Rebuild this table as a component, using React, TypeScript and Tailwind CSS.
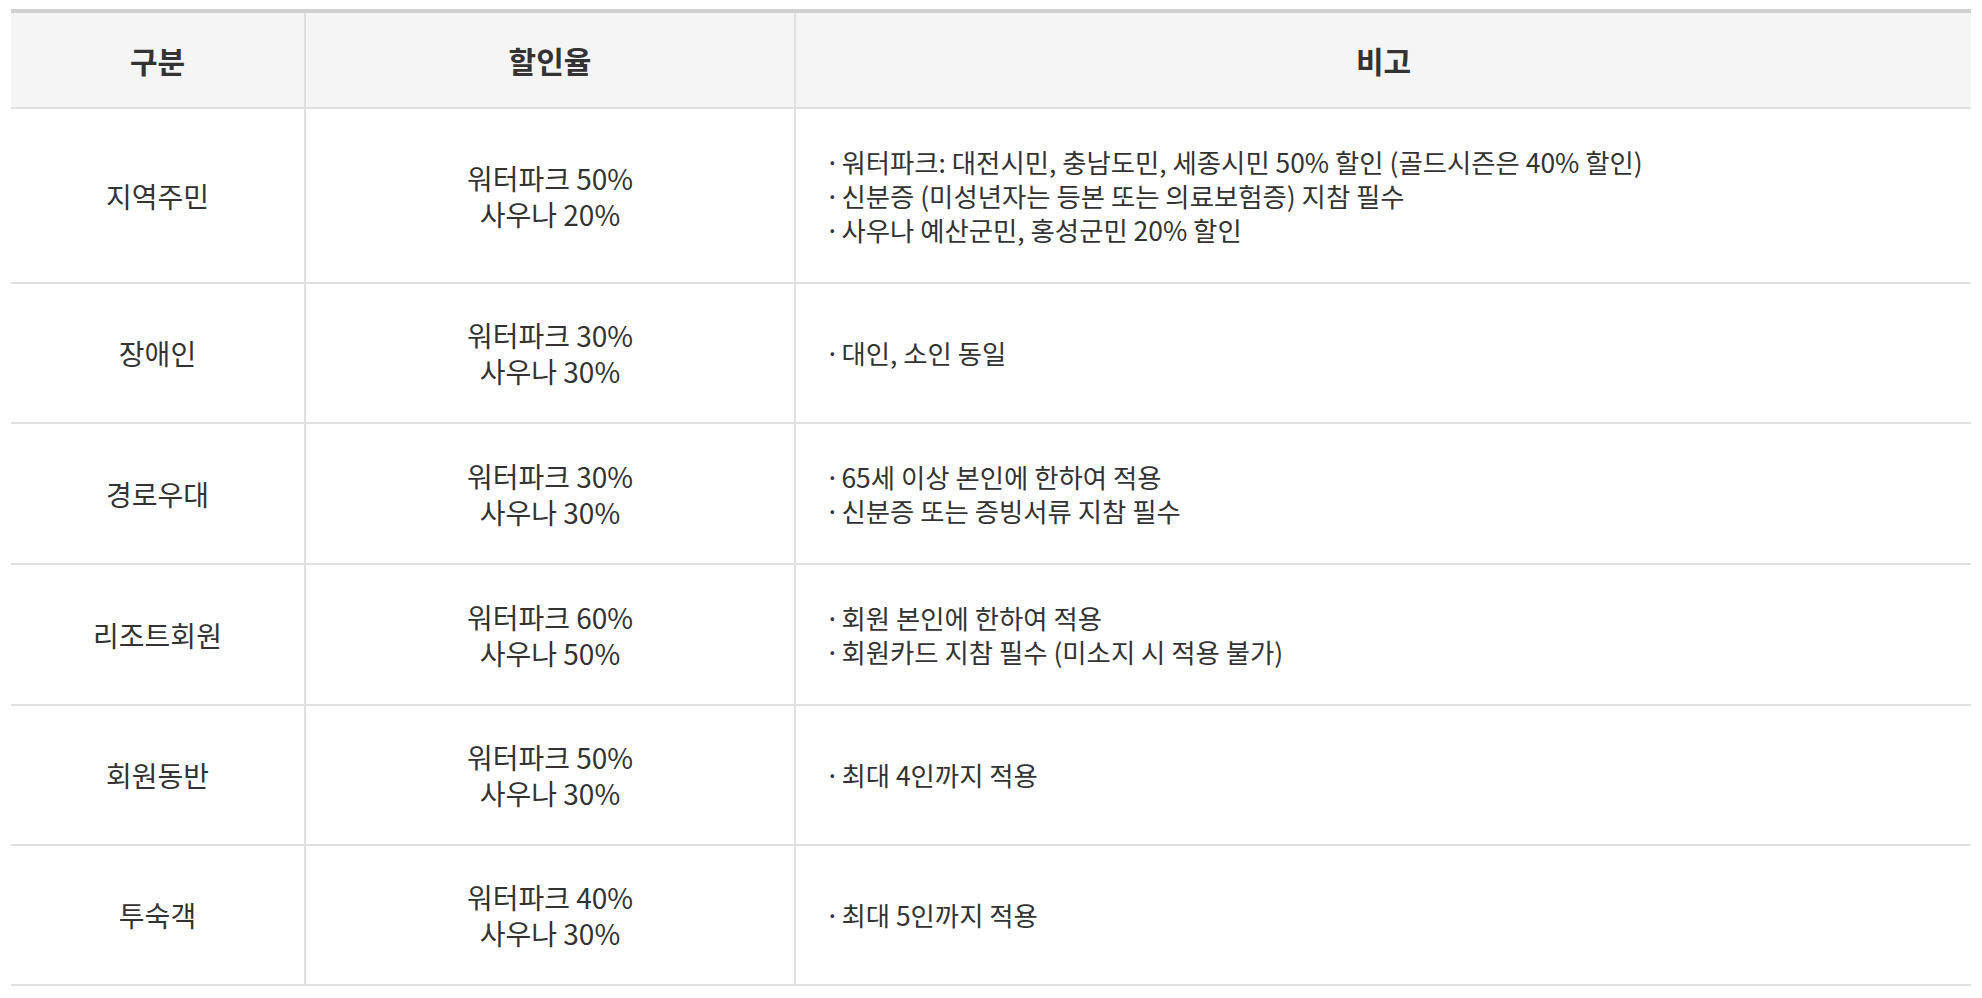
const rows = [
  {
    name: "지역주민",
    rate: ["워터파크 50%", "사우나 20%"],
    notes: [
      "워터파크: 대전시민, 충남도민, 세종시민 50% 할인 (골드시즌은 40% 할인)",
      "신분증 (미성년자는 등본 또는 의료보험증) 지참 필수",
      "사우나 예산군민, 홍성군민 20% 할인",
    ],
  },
  { name: "장애인", rate: ["워터파크 30%", "사우나 30%"], notes: ["대인, 소인 동일"] },
  {
    name: "경로우대",
    rate: ["워터파크 30%", "사우나 30%"],
    notes: ["65세 이상 본인에 한하여 적용", "신분증 또는 증빙서류 지참 필수"],
  },
  {
    name: "리조트회원",
    rate: ["워터파크 60%", "사우나 50%"],
    notes: ["회원 본인에 한하여 적용", "회원카드 지참 필수 (미소지 시 적용 불가)"],
  },
  { name: "회원동반", rate: ["워터파크 50%", "사우나 30%"], notes: ["최대 4인까지 적용"] },
  { name: "투숙객", rate: ["워터파크 40%", "사우나 30%"], notes: ["최대 5인까지 적용"] },
];

export default function App() {
  return (
    <div className="min-h-screen bg-white pl-[11px] pt-[9px] font-['Noto_Sans_CJK_KR','Noto_Sans',sans-serif] text-[#333]">
      <div className="w-[1960px] border-t-4 border-[#d1d1d1]">
        {/* header */}
        <div className="flex h-[96px] border-b-2 border-[#e0e0e0] bg-[#f5f5f5] text-[30px] font-bold">
          <div className="flex w-[295px] items-center justify-center border-r-2 border-[#e0e0e0]">구분</div>
          <div className="flex w-[490px] items-center justify-center border-r-2 border-[#e0e0e0]">할인율</div>
          <div className="flex flex-1 items-center justify-center">비고</div>
        </div>

        {rows.map((row) => (
          <div key={row.name} className="flex border-b-2 border-[#e0e0e0]">
            <div className="flex w-[295px] items-center justify-center border-r-2 border-[#e0e0e0] text-[28px] leading-[36px]">
              {row.name}
            </div>
            <div className="flex w-[490px] flex-col items-center justify-center border-r-2 border-[#e0e0e0] py-[33px] text-[28px] leading-[36px]">
              {row.rate.map((r) => (
                <span key={r}>{r}</span>
              ))}
            </div>
            <div className="flex flex-1 flex-col justify-center py-[35.5px] pl-[29px] text-[26.4px] leading-[34px]">
              {row.notes.map((n) => (
                <p key={n}>{"·\u200A" + n}</p>
              ))}
            </div>
          </div>
        ))}
      </div>
    </div>
  );
}
